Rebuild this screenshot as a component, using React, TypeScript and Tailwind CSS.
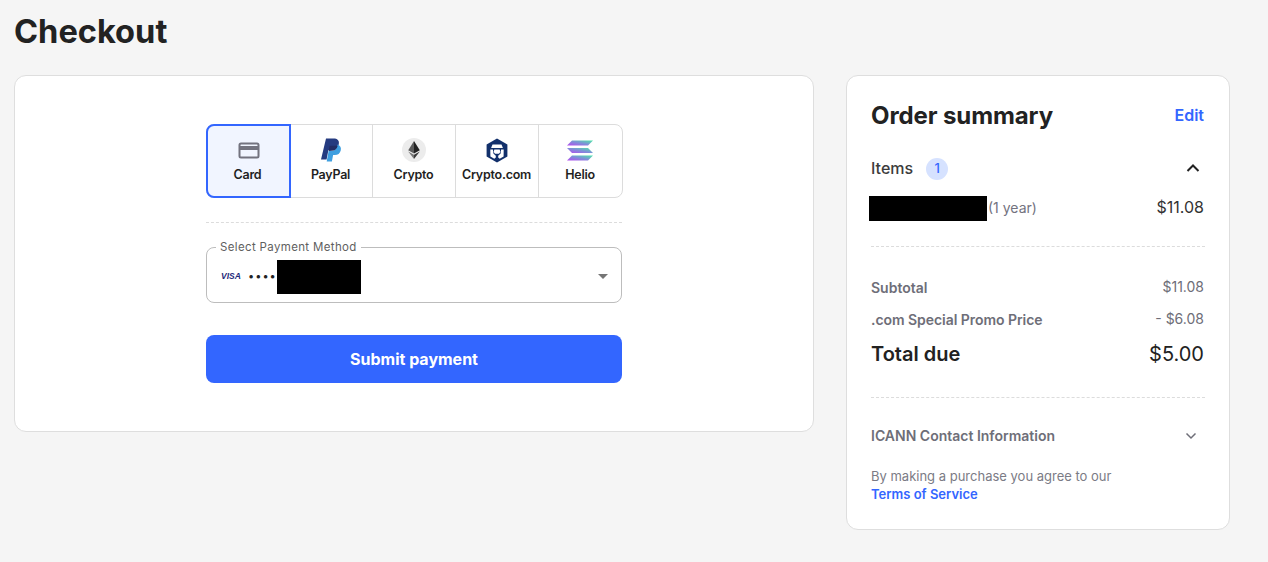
import React from "react";

const Tab = ({ label, icon, active, cls }: { label: string; icon: React.ReactNode; active?: boolean; cls?: string }) => (
  <div
    className={
      active
        ? "w-[85px] h-[74px] -my-px -ml-px shrink-0 flex flex-col items-center rounded-l-[8px] border-2 border-[#3366ff] bg-[#f1f5ff]"
        : `${cls} shrink-0 h-full flex flex-col items-center border-r border-[#dcdcdc] last:border-r-0`
    }
  >
    <div className={active ? "h-[26px] mt-[11px] flex items-center justify-center" : "h-[26px] mt-[12px] flex items-center justify-center"}>{icon}</div>
    <div className={active ? "mt-[3px] pr-[2px] text-[12.5px] leading-[18px] font-semibold text-[#1f1f1f] tracking-[-0.25px]" : "mt-[3px] text-[12.5px] leading-[18px] font-semibold text-[#1f1f1f] tracking-[-0.25px]"}>{label}</div>
  </div>
);

const CardIcon = () => (
  <svg width="22" height="18" viewBox="0 0 22 18">
    <rect x="1.5" y="2.5" width="19" height="14" rx="1.5" fill="none" stroke="#73737f" strokeWidth="2" />
    <rect x="1.5" y="5" width="19" height="4" fill="#73737f" />
  </svg>
);

const PayPalIcon = () => (
  <svg width="22" height="25" viewBox="0 0 22 25">
    <path d="M6 0.5h7.5c3.8 0 6 2 5.3 5.4-.8 4-3.6 6-7.3 6H8.4L6.6 21.5H1z" fill="#253b80" />
    <path d="M17.6 6.5c2.6 1 3.8 3 3.2 5.7-.7 3.2-3 4.9-6 4.9h-1.7l-1.2 6.4H6.7l1.9-10.6h3.3c3-.2 5-2.4 5.7-6.4z" fill="#3f9fe0" />
    <path d="M8.6 12.9l1-5.1h6.9c.5 0 .9.1 1.1.2-.7 3.1-3 4.7-5.7 4.8z" fill="#222d65" />
  </svg>
);

const EthIcon = () => (
  <svg width="24" height="24" viewBox="0 0 24 24">
    <circle cx="12" cy="12" r="12" fill="#ececec" />
    <path d="M12 3L6.2 12.3 12 15.6z" fill="#5c5c5c" />
    <path d="M12 3l5.8 9.3L12 15.6z" fill="#222" />
    <path d="M6.2 13.5L12 21v-4.2z" fill="#777" />
    <path d="M17.8 13.5L12 21v-4.2z" fill="#3a3a3a" />
  </svg>
);

const CroIcon = () => (
  <svg width="22" height="25" viewBox="0 0 22 25">
    <path d="M11 0.5l10.4 6v12L11 24.5l-10.4-6v-12z" fill="#12306b" />
    <path d="M6.5 6.5h9l1.4 3.6H5.1z" fill="#fff" />
    <path d="M8.3 11.5h5.4l.7 2.6-1.5 1.6h-3.8l-1.5-1.6z" fill="#fff" />
    <path d="M4.3 11.5h2.6l.5 4 2.4 2.2v1.9l-1.5 1.2-3.9-2.4z" fill="#fff" />
    <path d="M17.7 11.5h-2.6l-.5 4-2.4 2.2v1.9l1.5 1.2 3.9-2.4z" fill="#fff" />
  </svg>
);

const HelioIcon = () => (
  <svg width="26" height="21" viewBox="0 0 26 21">
    <defs>
      <linearGradient id="h" x1="0" y1="1" x2="1" y2="0">
        <stop offset="0" stopColor="#b44cf0" />
        <stop offset="0.5" stopColor="#7f8fd8" />
        <stop offset="1" stopColor="#4de8a8" />
      </linearGradient>
    </defs>
    <path d="M5 0.5h21l-5 5H0z" fill="url(#h)" />
    <path d="M0 8h21l5 5H5z" fill="url(#h)" />
    <path d="M5 15.5h21l-5 5H0z" fill="url(#h)" />
  </svg>
);

const Chevron = ({ up, color, w }: { up?: boolean; color: string; w: number }) => (
  <svg width="14" height="10" viewBox="0 0 14 10" fill="none">
    <path d={up ? "M1.5 8l5.5-5.5 5.5 5.5" : "M2.5 2.5l4.5 4.5 4.5-4.5"} stroke={color} strokeWidth={w} />
  </svg>
);

export default function App() {
  return (
    <div className="w-[1268px] h-[562px] overflow-hidden bg-[#f5f5f5] pl-[14px] font-['Inter',sans-serif] text-[#222]">
      <h1 className="h-[75px] pt-[11px] text-[32.6px] leading-[40px] font-bold text-[#222]">Checkout</h1>
      <div className="flex items-start gap-[32px]">
        <main className="w-[800px] h-[357px] rounded-[12px] border border-[#dedede] bg-white pt-[48px] flex flex-col items-center">
          <div className="w-[416px]">
            <div className="flex h-[74px] -mr-px rounded-[8px] border border-[#dcdcdc] items-stretch">
              <Tab label="Card" icon={<CardIcon />} active cls="" />
              <Tab label="PayPal" icon={<PayPalIcon />} cls="w-[82px] pr-[2px]" />
              <Tab label="Crypto" icon={<EthIcon />} cls="w-[83px] pr-[1px]" />
              <Tab label="Crypto.com" icon={<CroIcon />} cls="w-[83px] pr-[1px]" />
              <Tab label="Helio" icon={<HelioIcon />} cls="w-[83px] pr-[1px]" />
            </div>
            <div className="mt-[24px] border-t border-dashed border-[#dcdcdc]" />
            <fieldset className="mt-[17px] h-[63px] rounded-[8px] border border-[#bdbdbd] pl-[14px] pr-[13px] flex items-center">
              <legend className="-ml-[5px] px-[4px] text-[11.5px] leading-[14px] text-[#5f5f5f] tracking-[0.35px]">Select Payment Method</legend>
              <div className="flex w-full items-center h-[48px] -mt-[3px]">
                <span className="w-[27px] text-[8.5px] leading-none font-bold italic text-[#1f2a7a] font-['Liberation_Sans',sans-serif]">VISA</span>
                <span className="text-[11px] leading-none tracking-[1px] text-[#222]">••••</span>
                <div className="w-[84px] h-[34px] bg-black" />
                <div className="ml-auto w-0 h-0 border-x-[5px] border-x-transparent border-t-[5px] border-t-[#757575]" />
              </div>
            </fieldset>
            <button className="mt-[32px] w-full h-[48px] rounded-[8px] bg-[#3366ff] text-white text-[16px] font-bold">Submit payment</button>
          </div>
        </main>
        <aside className="w-[384px] h-[455px] rounded-[12px] border border-[#dedede] bg-white px-[24px]">
          <div className="mt-[24px] h-[32px] pr-px flex items-center justify-between">
            <h2 className="text-[24px] leading-[32px] font-bold text-[#222] tracking-[-0.1px]">Order summary</h2>
            <a className="-mt-[2px] text-[16px] font-semibold text-[#3366ff]">Edit</a>
          </div>
          <div className="mt-[25px] h-[24px] flex items-center">
            <span className="-mt-[2px] text-[16px] font-medium text-[#3c3c3c]">Items</span>
            <span className="ml-[13px] w-[22px] h-[22px] rounded-full bg-[#d6e2ff] text-[#3366ff] text-[13px] font-medium flex items-center justify-center">1</span>
            <span className="-mt-[2px] ml-auto mr-[5px]"><Chevron up color="#222" w={2} /></span>
          </div>
          <div className="mt-[15px] h-[25px] pr-px flex items-center">
            <div className="-ml-[2px] w-[118px] h-[25px] bg-black" />
            <span className="-mt-[3px] ml-[1px] text-[14px] text-[#73737f]">(1 year)</span>
            <span className="-mt-[3px] ml-auto text-[16px] text-[#333]">$11.08</span>
          </div>
          <div className="mt-[25px] border-t border-dashed border-[#dcdcdc]" />
          <div className="mt-[31px] h-[18px] pr-px flex items-center justify-between text-[14px] text-[#6e6e78]">
            <span className="font-semibold">Subtotal</span><span className="-mt-[2px]">$11.08</span>
          </div>
          <div className="mt-[14px] h-[18px] pr-px flex items-center justify-between text-[14px] text-[#6e6e78]">
            <span className="font-semibold tracking-[-0.05px]">.com Special Promo Price</span><span className="-mt-[2px]">- $6.08</span>
          </div>
          <div className="mt-[13px] h-[26px] pr-px flex items-center justify-between text-[#222]">
            <span className="text-[20px] font-semibold">Total due</span><span className="text-[20px]">$5.00</span>
          </div>
          <div className="mt-[30px] border-t border-dashed border-[#dcdcdc]" />
          <div className="mt-[28px] h-[18px] flex items-center justify-between">
            <span className="text-[14px] font-semibold text-[#6e6e78]">ICANN Contact Information</span>
            <span className="mr-[7px] mt-[2px]"><Chevron color="#6e6e78" w={1.5} /></span>
          </div>
          <p className="mt-[23px] text-[13px] leading-[18px] text-[#7b7b85]">
            By making a purchase you agree to our<br />
            <a className="font-semibold text-[#3366ff]">Terms of Service</a>
          </p>
        </aside>
      </div>
    </div>
  );
}
